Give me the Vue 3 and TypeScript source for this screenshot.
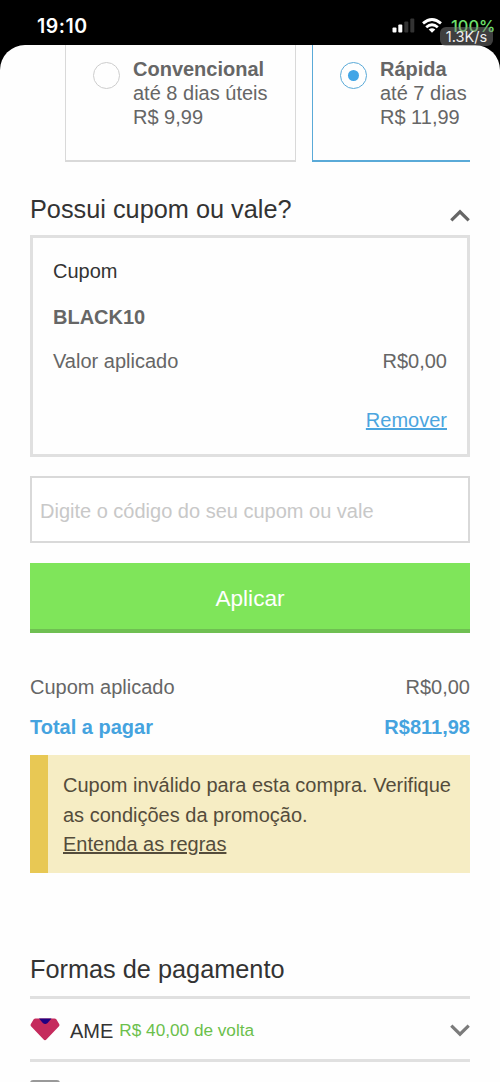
<script setup lang="ts">
interface ShippingOption {
  name: string
  deadline: string
  price: string
  selected: boolean
}

const shipping: ShippingOption[] = [
  { name: 'Convencional', deadline: 'até 8 dias úteis', price: 'R$ 9,99', selected: false },
  { name: 'Rápida', deadline: 'até 7 dias', price: 'R$ 11,99', selected: true },
]
</script>

<template>
  <div class="phone">
    <header class="status">
      <span class="clock">19:10</span>
      <div class="indicators">
        <svg class="signal" width="24" height="16" viewBox="0 0 24 16">
          <rect x="0.5" y="9.5" width="4" height="5" rx="1" fill="#fff" />
          <rect x="6.3" y="6.5" width="4" height="8" rx="1" fill="#fff" />
          <rect x="12.3" y="3.5" width="4" height="11" rx="1" fill="#333" />
          <rect x="18.3" y="0.5" width="4" height="14" rx="1" fill="#333" />
        </svg>
        <svg class="wifi" width="20" height="16" viewBox="0 0 20 16">
          <g fill="none" stroke="#fff" stroke-width="2.8">
            <path d="M1 5.4Q10 -2.4 19 5.4" />
            <path d="M4.2 9.2Q10 4.2 15.8 9.2" />
          </g>
          <path d="M6.7 11.5Q10 9.1 13.3 11.5L10 14.8Z" fill="#fff" />
        </svg>
        <span class="battery">100%</span>
      </div>
      <span class="speed">1.3K/s</span>
    </header>

    <main class="sheet">
      <section class="shipping">
        <article
          v-for="option in shipping"
          :key="option.name"
          class="option"
          :class="{ selected: option.selected }"
        >
          <span class="radio"></span>
          <div>
            <strong>{{ option.name }}</strong>
            <p>{{ option.deadline }}</p>
            <p>{{ option.price }}</p>
          </div>
        </article>
      </section>

      <section class="coupon">
        <div class="heading">
          <h2>Possui cupom ou vale?</h2>
          <svg class="chevron-up" width="20" height="13" viewBox="0 0 20 13">
            <path d="M1.3 11.4L10 2.8L18.7 11.4" fill="none" stroke="#666" stroke-width="3.2" />
          </svg>
        </div>
        <div class="coupon-box">
          <p class="label">Cupom</p>
          <strong>BLACK10</strong>
          <div class="row">
            <span>Valor aplicado</span>
            <span>R$0,00</span>
          </div>
          <a class="remove">Remover</a>
        </div>
        <input class="code" type="text" placeholder="Digite o código do seu cupom ou vale" />
        <button class="apply" type="button">Aplicar</button>
      </section>

      <section class="totals">
        <div class="row">
          <span>Cupom aplicado</span>
          <span>R$0,00</span>
        </div>
        <div class="row total">
          <span>Total a pagar</span>
          <span>R$811,98</span>
        </div>
      </section>

      <aside class="notice">
        <p>Cupom inválido para esta compra. Verifique<br />as condições da promoção.</p>
        <a>Entenda as regras</a>
      </aside>

      <section class="payment">
        <h2>Formas de pagamento</h2>
        <div class="method">
          <svg width="30" height="23" viewBox="0 0 30 23">
            <path
              d="M5.5 0.5H24.5Q25.6 0.5 26.3 1.3L29.3 6.3Q29.8 7.3 29 8.3L16.6 21.3Q15 23 13.4 21.3L1 8.3Q0.2 7.3 0.7 6.3L3.7 1.3Q4.4 0.5 5.5 0.5Z"
              fill="#c52b5d"
            />
            <path d="M9 0.5H21.5L17.6 5Q15.2 6.8 12.8 5Z" fill="#210081" />
          </svg>
          <span class="method-name">AME</span>
          <span class="cashback">R$ 40,00 de volta</span>
          <svg class="chevron-down" width="20" height="13" viewBox="0 0 20 13">
            <path d="M1.3 1.6L10 10.2L18.7 1.6" fill="none" stroke="#7b7b7b" stroke-width="3.2" />
          </svg>
        </div>
        <div class="method next"><span class="card-edge"></span></div>
      </section>
    </main>
  </div>
</template>

<style>
body {
  margin: 0;
  background: #000;
}
</style>

<style scoped>
.phone {
  box-sizing: border-box;
  width: 500px;
  height: 1082px;
  overflow: hidden;
  background: #000;
  color: #666;
  font: 20px/24px "Liberation Sans", Arial, sans-serif;
}
p,
h2 {
  margin: 0;
}
.status {
  position: relative;
  display: flex;
  justify-content: space-between;
  box-sizing: border-box;
  height: 45px;
  padding: 14px 5px 0 37px;
  color: #fff;
  font-family: Inter, sans-serif;
}
.clock {
  font-size: 19.5px;
  font-weight: 600;
  letter-spacing: 0.5px;
  line-height: 24px;
}
.indicators {
  display: flex;
  align-items: flex-start;
}
.signal {
  margin: 4px 6px 0 0;
}
.wifi {
  margin: 4px 9px 0 0;
}
.battery {
  width: 44px;
  color: #6fe06d;
  font-size: 16.4px;
  font-weight: 500;
  line-height: 24px;
  white-space: nowrap;
}
.speed {
  position: absolute;
  top: 27px;
  right: 7px;
  width: 53px;
  height: 19px;
  border-radius: 6px;
  background: rgba(125, 125, 125, 0.5);
  color: #eee;
  font: 14.6px/20px Inter, sans-serif;
  text-align: center;
}
.sheet {
  box-sizing: border-box;
  height: 1037px;
  padding: 0 30px;
  overflow: hidden;
  border-radius: 25px 25px 0 0;
  background: #fefefe;
}
.shipping {
  display: flex;
  gap: 16px;
  height: 117px;
  padding-left: 35px;
  overflow: hidden;
}
.option {
  display: flex;
  flex: 0 0 231px;
  gap: 13px;
  box-sizing: border-box;
  padding: 12px 0 0 27px;
  border: solid #d9d9d9;
  border-width: 0 1.5px 2px;
}
.option.selected {
  border-color: #5aaad8;
}
.option strong {
  display: block;
}
.radio {
  display: flex;
  align-items: center;
  justify-content: center;
  box-sizing: border-box;
  width: 27px;
  height: 27px;
  margin-top: 5px;
  border: 1.5px solid #ccc;
  border-radius: 50%;
}
.selected .radio {
  border-color: #5aaad8;
}
.selected .radio::after {
  width: 11px;
  height: 11px;
  border-radius: 50%;
  background: #42a5e6;
  content: "";
}
.heading {
  display: flex;
  justify-content: space-between;
  height: 73px;
}
h2 {
  color: #333;
  font-size: 25.3px;
  font-weight: 400;
  line-height: 30px;
}
.heading h2 {
  margin-top: 32px;
}
.chevron-up {
  margin-top: 47px;
}
.coupon-box {
  display: flex;
  flex-direction: column;
  box-sizing: border-box;
  height: 222px;
  padding: 21px 20px 0;
  border: 3px solid #e0e0e0;
}
.label {
  color: #333;
}
.coupon-box strong {
  margin-top: 22px;
}
.row {
  display: flex;
  justify-content: space-between;
}
.coupon-box .row {
  margin-top: 20px;
}
.remove {
  align-self: flex-end;
  margin-top: 35px;
  color: #4ba5df;
  text-decoration: underline;
}
.code {
  display: block;
  box-sizing: border-box;
  width: 440px;
  height: 67px;
  margin: 19px 0 20px;
  padding: 3px 8px 0;
  border: 2px solid #d9d9d9;
  border-radius: 0;
  background: #fff;
  font: inherit;
}
.code::placeholder {
  color: #c8c8c8;
  opacity: 1;
}
.apply {
  display: block;
  box-sizing: border-box;
  width: 440px;
  height: 70px;
  padding: 5px 0 0;
  border: 0;
  border-bottom: 4px solid #6fbf52;
  background: #7fe55a;
  color: #fff;
  font: 22.6px/61px "Liberation Sans", Arial, sans-serif;
}
.totals {
  display: flex;
  flex-direction: column;
  gap: 16px;
  margin-top: 42px;
}
.total {
  color: #45a3df;
  font-weight: 700;
}
.notice {
  box-sizing: border-box;
  height: 118px;
  margin-top: 16px;
  padding: 16px 0 0 15px;
  border-left: 18px solid #e8c854;
  background: #f6edc4;
  color: #544c3b;
  line-height: 29.5px;
  white-space: nowrap;
}
.notice a {
  text-decoration: underline;
}
.payment h2 {
  margin-top: 81px;
  padding-bottom: 12px;
}
.method {
  display: flex;
  align-items: center;
  box-sizing: border-box;
  height: 63px;
  border-top: 3px solid #e0e0e0;
}
.method-name {
  margin: 3px 6px 0 10px;
  color: #333;
}
.cashback {
  margin-top: 1px;
  color: #6bc04b;
  font-size: 17.2px;
}
.chevron-down {
  margin: 3px 0 0 auto;
}
.next {
  align-items: flex-start;
}
.card-edge {
  width: 30px;
  height: 10px;
  margin-top: 18px;
  border-radius: 3px 3px 0 0;
  background: #999;
}
</style>
